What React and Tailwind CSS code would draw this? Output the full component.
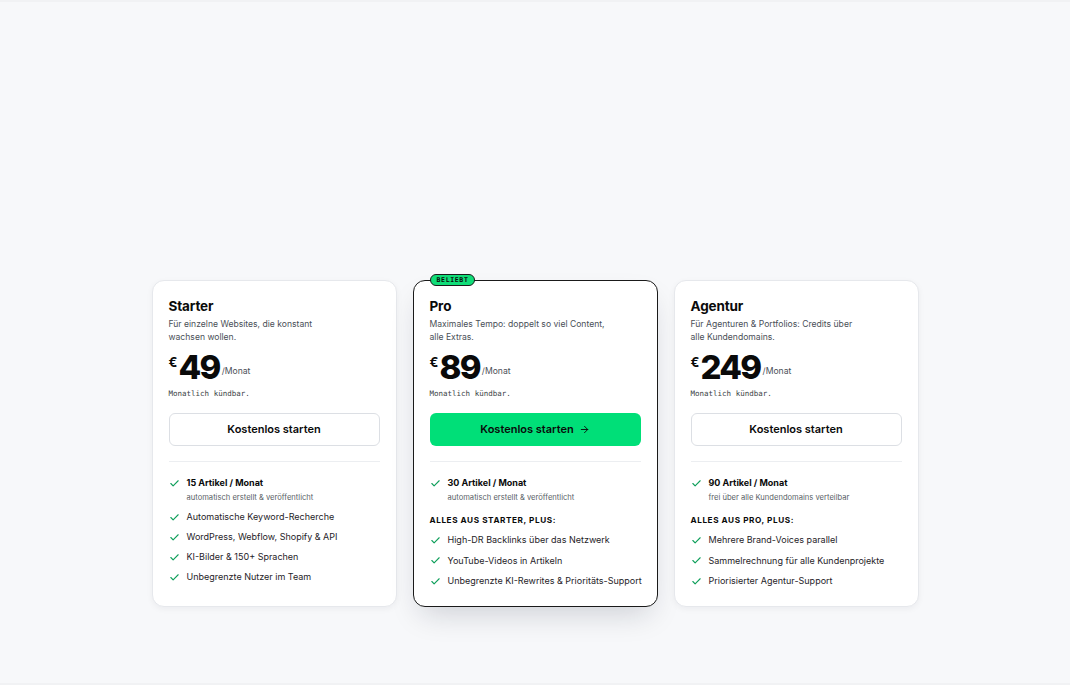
import React from "react";
import { Check, ArrowRight } from "lucide-react";

const plans = [
  {
    name: "Starter",
    desc: ["Für einzelne Websites, die konstant", "wachsen wollen."],
    price: "49",
    volume: "15 Artikel / Monat",
    volumeNote: "automatisch erstellt & veröffentlicht",
    heading: null,
    features: [
      "Automatische Keyword-Recherche",
      "WordPress, Webflow, Shopify & API",
      "KI-Bilder & 150+ Sprachen",
      "Unbegrenzte Nutzer im Team",
    ],
  },
  {
    name: "Pro",
    featured: true,
    desc: ["Maximales Tempo: doppelt so viel Content,", "alle Extras."],
    price: "89",
    volume: "30 Artikel / Monat",
    volumeNote: "automatisch erstellt & veröffentlicht",
    heading: "Alles aus Starter, plus:",
    features: [
      "High-DR Backlinks über das Netzwerk",
      "YouTube-Videos in Artikeln",
      "Unbegrenzte KI-Rewrites & Prioritäts-Support",
    ],
  },
  {
    name: "Agentur",
    desc: ["Für Agenturen & Portfolios: Credits über", "alle Kundendomains."],
    price: "249",
    volume: "90 Artikel / Monat",
    volumeNote: "frei über alle Kundendomains verteilbar",
    heading: "Alles aus Pro, plus:",
    features: [
      "Mehrere Brand-Voices parallel",
      "Sammelrechnung für alle Kundenprojekte",
      "Priorisierter Agentur-Support",
    ],
  },
];

function Tick() {
  return (
    <Check
      className="w-[11px] h-[11px] shrink-0 text-[#0f9f5b] mt-[1.5px]"
      strokeWidth={2.4}
    />
  );
}

function PlanCard({ plan }) {
  const featured = plan.featured;
  return (
    <div
      className={
        featured
          ? "relative flex flex-col w-[245px] shrink-0 rounded-[12px] bg-white border border-[#1a1a1a] px-4 pt-4 pb-[18px] shadow-[0_14px_30px_-8px_rgba(15,23,42,0.18)]"
          : "relative flex flex-col w-[245px] shrink-0 rounded-[12px] bg-white border border-[#e6e8ec] px-4 pt-4 pb-[18px] shadow-[0_2px_6px_rgba(15,23,42,0.05)]"
      }
    >
      {featured && (
        <span className="absolute left-4 top-[-7px] h-[12px] px-[6px] rounded-full bg-[#10dd78] border border-[#1a1a1a] flex items-center font-['DejaVu_Sans_Mono',monospace] text-[6.5px] font-bold tracking-[0.1em] text-[#0a0a0a] leading-none">
          BELIEBT
        </span>
      )}
      <h3 className="text-[13.5px] leading-[18px] font-bold text-[#0a0a0a] tracking-[-0.01em]">
        {plan.name}
      </h3>
      <p className="mt-[3px] text-[8.6px] leading-[13px] text-[#4a4f57]">
        {plan.desc[0]}
        <br />
        {plan.desc[1]}
      </p>
      <div className="mt-[7px] flex items-start">
        <span className="text-[13px] font-bold leading-none mt-[5px] text-[#0a0a0a]">€</span>
        <span className="ml-px text-[33px] font-extrabold leading-[32px] tracking-[-0.05em] text-[#0a0a0a]">
          {plan.price}
        </span>
        <span className="ml-[2px] mt-[16px] text-[8.6px] leading-none text-[#4a4f57]">/Monat</span>
      </div>
      <p className="mt-[5px] font-['DejaVu_Sans_Mono',monospace] text-[7.5px] leading-[12px] text-[#3a3f46]">
        Monatlich kündbar.
      </p>
      <button
        className={
          featured
            ? "mt-[13px] h-[33px] w-full rounded-[6px] bg-[#00df78] flex items-center justify-center gap-[5px] text-[11px] font-semibold text-[#0a0a0a]"
            : "mt-[13px] h-[33px] w-full rounded-[6px] bg-white border border-[#dcdfe4] flex items-center justify-center text-[11px] font-semibold text-[#0a0a0a]"
        }
      >
        Kostenlos starten
        {featured && <ArrowRight className="w-[11px] h-[11px]" strokeWidth={2} />}
      </button>
      <div className="mt-[15px] h-px bg-[#eceef1]" />
      <div className="mt-[14px] flex gap-[7px]">
        <Tick />
        <div className="flex flex-col">
          <span className="text-[9px] leading-[14px] font-bold text-[#0a0a0a]">{plan.volume}</span>
          <span className="mt-[2px] text-[7.6px] leading-[12px] text-[#5a5f67]">{plan.volumeNote}</span>
        </div>
      </div>
      {plan.heading && (
        <p className="mt-[10px] text-[8.2px] leading-[12px] font-bold uppercase tracking-[0.07em] text-[#0a0a0a]">
          {plan.heading}
        </p>
      )}
      <ul
        className={
          plan.heading
            ? "mt-[7px] flex flex-col gap-[6.5px]"
            : "mt-[6px] flex flex-col gap-[6px]"
        }
      >
        {plan.features.map((f) => (
          <li key={f} className="flex gap-[7px]">
            <Tick />
            <span className="whitespace-nowrap text-[9px] leading-[14px] text-[#1f2328]">{f}</span>
          </li>
        ))}
      </ul>
    </div>
  );
}

export default function App() {
  return (
    <div className="min-h-[685px] bg-[#f7f8fa] border-t-2 border-b-2 border-[#f1f2f4] font-['Inter',sans-serif] antialiased">
      <div className="flex justify-center gap-4 pt-[278px]">
        {plans.map((p) => (
          <PlanCard key={p.name} plan={p} />
        ))}
      </div>
    </div>
  );
}
